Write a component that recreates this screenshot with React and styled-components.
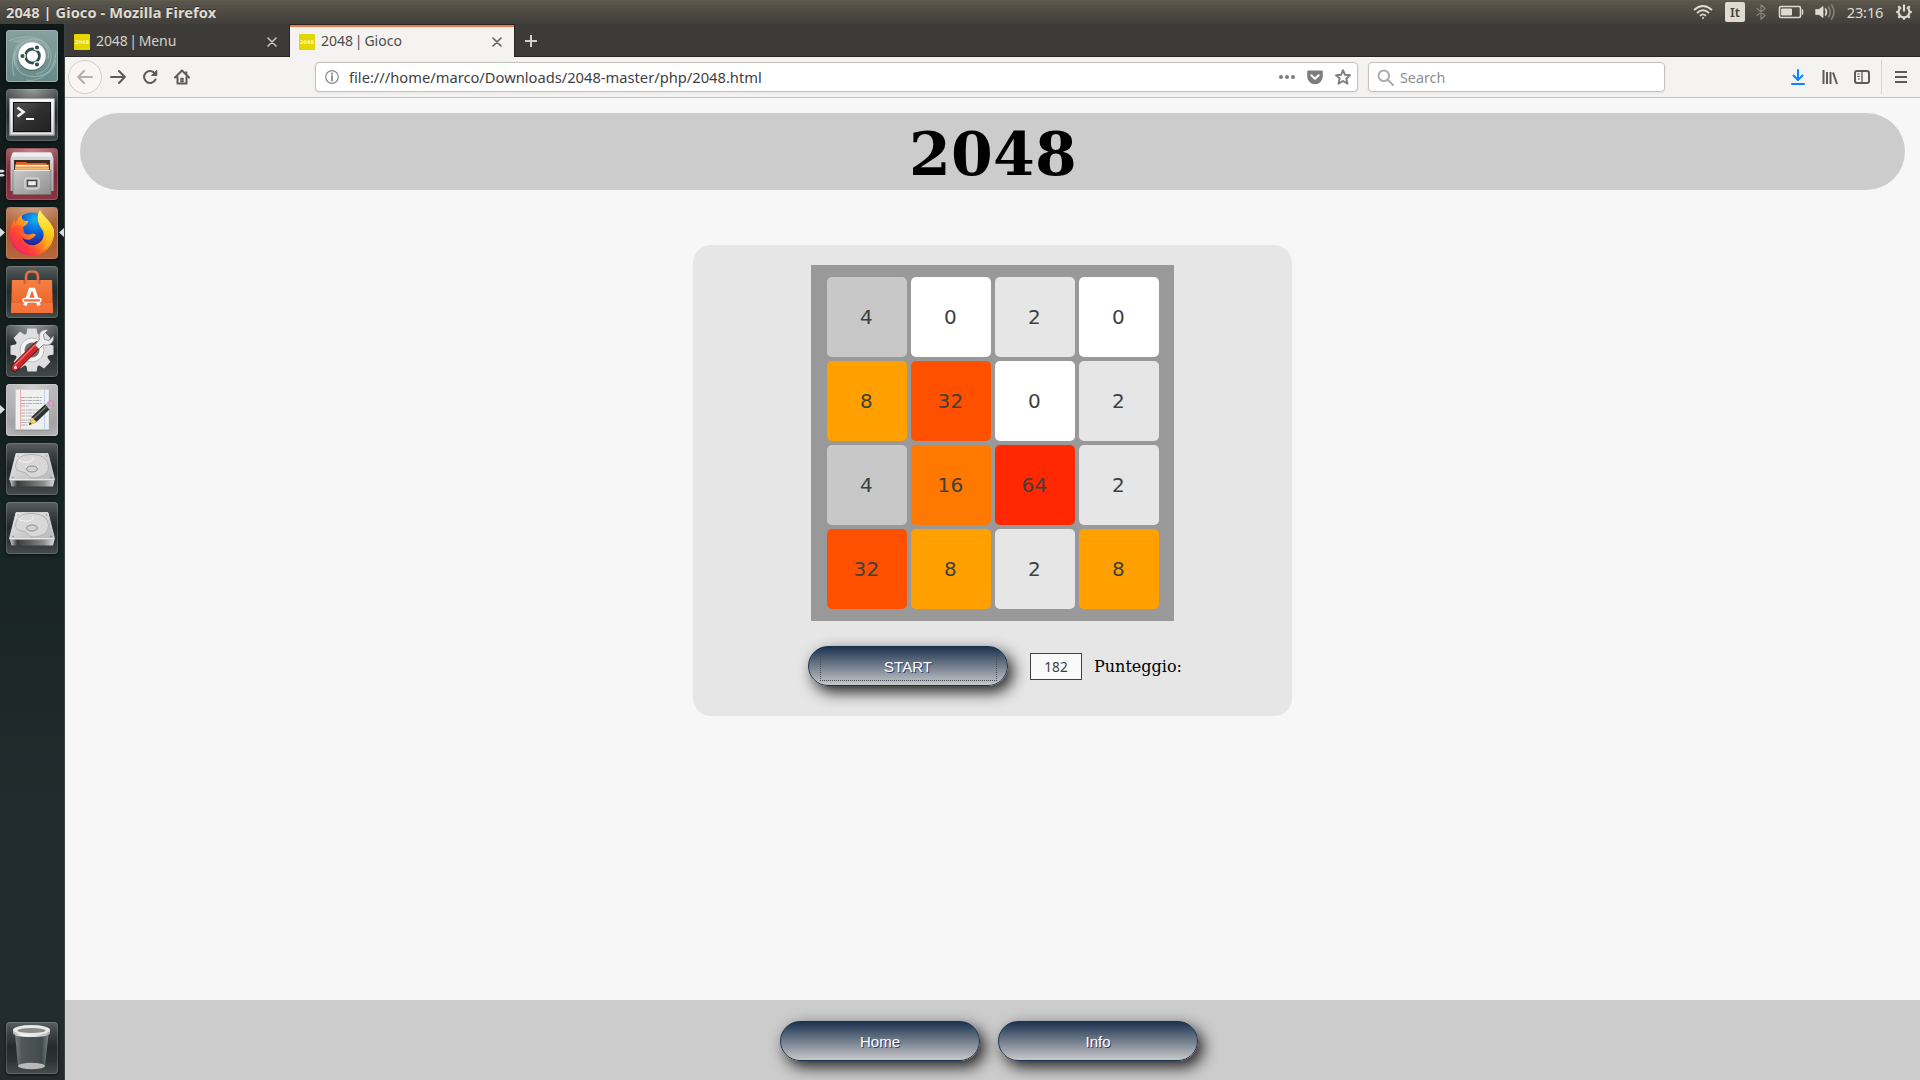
import React from "react";
import styled, { createGlobalStyle } from "styled-components";

const GlobalStyle = createGlobalStyle`
  * { box-sizing: border-box; }
  html, body { margin: 0; padding: 0; }
  body { width: 1920px; height: 1080px; overflow: hidden; background: #f7f7f7; }
  svg { display: block; flex: none; }
`;

const UI_FONT = `"Noto Sans", "Open Sans", sans-serif`;

const Desktop = styled.div`
  width: 1920px;
  height: 1080px;
  display: flex;
  flex-direction: column;
  overflow: hidden;
  font-family: ${UI_FONT};
`;

const TopPanel = styled.header`
  height: 24px;
  flex: none;
  display: flex;
  align-items: center;
  padding: 0 8px 0 6px;
  background: linear-gradient(#67634f 0, #5b574d 1px, #57534a 4px, #403f39 100%);
`;

const Text = styled.span`
  font-size: ${(p) => p.$size || 14}px;
  font-weight: ${(p) => p.$weight || 400};
  letter-spacing: ${(p) => p.$ls || 0}px;
  color: ${(p) => p.$color};
  line-height: 20px;
  white-space: pre;
`;

const WindowTitle = styled(Text)`
  flex: 1;
  padding-bottom: 1px;
  text-shadow: 0 -1px 0 #2f2e2a;
`;

const Clock = styled(Text)`
  padding-bottom: 1px;
`;

const Indicators = styled.div`
  display: flex;
  align-items: center;
  height: 24px;
`;

const Slot = styled.div`
  width: ${(p) => p.$w}px;
  margin-right: ${(p) => p.$mr || 0}px;
  display: flex;
  justify-content: center;
  align-items: center;
  flex: none;
`;

const LangBadge = styled.div`
  width: 20px;
  height: 20px;
  border-radius: 2px;
  background: #dfdbd2;
  color: #45433d;
  font-size: 13px;
  font-weight: 600;
  line-height: 20px;
  text-align: center;
`;

const Below = styled.div`
  flex: 1;
  display: flex;
  min-height: 0;
`;

const Launcher = styled.nav`
  width: 65px;
  flex: none;
  display: flex;
  flex-direction: column;
  gap: 7px;
  padding: 6px 0 6px 6px;
  border-right: 1px solid #3a4042;
  background: linear-gradient(#0f1918 0, #152120 40%, #222b2d 75%, #232b2d 100%);
`;

const Tile = styled.div`
  position: relative;
  width: 52px;
  height: 52px;
  flex: none;
  border-radius: 4px;
  background: ${(p) => p.$bg};
  box-shadow: inset 0 0 0 1px ${(p) => p.$edge || "rgba(255,255,255,0.16)"},
    0 1px 3px rgba(0, 0, 0, 0.6);
  margin-top: ${(p) => (p.$last ? "auto" : "0")};
`;

const Pip = styled.svg`
  position: absolute;
  left: ${(p) => p.$x}px;
  top: ${(p) => p.$y}px;
`;

const Browser = styled.section`
  flex: 1;
  display: flex;
  flex-direction: column;
  min-width: 0;
`;

const TabStrip = styled.div`
  height: 33px;
  flex: none;
  display: flex;
  background: #3c3b37;
  box-shadow: inset 0 -1px 0 #262521;
`;

const Tab = styled.div`
  width: ${(p) => (p.$active ? 226 : 224)}px;
  height: 33px;
  display: flex;
  align-items: center;
  padding: 2px 12px 0 9px;
  border: solid #262521;
  border-width: ${(p) => (p.$active ? "0 1px" : "0")};
  background: ${(p) =>
    p.$active
      ? "linear-gradient(#262521 0 1px, #f07746 1px 3px, #f4f3f2 3px)"
      : "transparent"};
`;

const Favicon = styled.div`
  width: 16px;
  height: 16px;
  flex: none;
  border-radius: 1px;
  background: #e6d600;
  color: #fff8b0;
  font: bold 5px/16px "DejaVu Sans", sans-serif;
  text-align: center;
  margin-right: 6px;
`;

const TabLabel = styled(Text)`
  flex: 1;
  word-spacing: -1.8px;
  padding-bottom: 1px;
`;

const NewTab = styled.div`
  width: 31px;
  height: 33px;
  display: flex;
  align-items: center;
  justify-content: center;
`;

const NavBar = styled.div`
  height: 41px;
  flex: none;
  display: flex;
  align-items: center;
  background: #f4f3f2;
  border-bottom: 1px solid #c2c1c0;
  padding: 0 1px 0 3px;
`;

const BackButton = styled.div`
  width: 34px;
  height: 34px;
  border: 1px solid #d0cfce;
  border-radius: 50%;
  background: #f7f6f5;
  display: flex;
  align-items: center;
  justify-content: center;
`;

const Field = styled.div`
  width: ${(p) => p.$w}px;
  height: 30px;
  margin-left: ${(p) => p.$ml}px;
  display: flex;
  align-items: center;
  padding-left: ${(p) => p.$pl}px;
  background: #fff;
  border: 1px solid #c4c2c0;
  border-radius: 4px;
  box-shadow: 0 1px 3px rgba(0, 0, 0, 0.07);
`;

const FieldText = styled(Text)`
  flex: 1;
  margin-left: ${(p) => p.$ml}px;
  padding-top: ${(p) => p.$pt || 0}px;
`;

const Spacer = styled.div`
  flex: 1;
`;

const Divider = styled.div`
  width: 1px;
  height: 34px;
  background: #d5d4d3;
  margin-left: 3px;
`;

const Page = styled.main`
  flex: 1;
  display: flex;
  flex-direction: column;
  align-items: center;
  background: #f7f7f7;
  padding-top: 15px;
  font-family: "DejaVu Serif", serif;
`;

const Banner = styled.h1`
  width: 1825px;
  height: 77px;
  flex: none;
  margin: 0;
  padding-left: 1px;
  border-radius: 40px;
  background: #ccc;
  color: #000;
  font: bold 60px/82px "DejaVu Serif", serif;
  letter-spacing: 0.3px;
  text-align: center;
`;

const Card = styled.section`
  width: 599px;
  height: 471px;
  margin-top: 55px;
  border-radius: 18px;
  background: #e6e6e6;
  display: flex;
  flex-direction: column;
  align-items: center;
  padding-top: 20px;
`;

const Board = styled.div`
  width: 363px;
  height: 356px;
  background: #999;
  padding: 12px 15px 12px 16px;
  display: grid;
  grid-template-columns: repeat(4, 80px);
  grid-auto-rows: 80px;
  gap: 4px;
`;

const cellColors = {
  0: "#ffffff",
  2: "#e6e6e6",
  4: "#c8c8c8",
  8: "#ffa000",
  16: "#ff7800",
  32: "#ff5000",
  64: "#ff2800",
};

const Cell = styled.div`
  background: ${(p) => cellColors[p.$v]};
  border-radius: 5px;
  color: #404040;
  font: 20px/81px "DejaVu Sans", sans-serif;
  letter-spacing: 0.3px;
  text-align: center;
  padding-right: 1px;
`;

const Controls = styled.div`
  width: 371px;
  height: 40px;
  margin: 25px 0 0 2px;
  display: flex;
  align-items: center;
`;

const PillButton = styled.button`
  width: 200px;
  height: 40px;
  flex: none;
  margin: 0;
  padding: 0;
  border: 1px solid #1c3350;
  border-radius: 20px;
  background: linear-gradient(#1c3350, #c8c8c8);
  box-shadow: 5px 6px 15px #222;
  color: #fff;
  font: 15px/40px "Liberation Sans", sans-serif;
  text-shadow: 1px 1px 0 #2f3d70;
  text-align: center;
`;

const FocusRing = styled.span`
  display: block;
  width: 177px;
  height: 26px;
  margin: 3px auto 0;
  border: dotted #444b54;
  border-width: 0 1px 1px;
  line-height: 24px;
`;

const Score = styled.div`
  width: 52px;
  height: 27px;
  flex: none;
  margin: 1px 0 0 22px;
  border: 1px solid #404040;
  background: #fafafa;
  color: #404040;
  font: 13.6px/26px "Noto Sans", sans-serif;
  text-align: center;
`;

const ScoreLabel = styled.span`
  flex: none;
  margin-left: 12px;
  padding-top: 2px;
  font: 16px/20px "DejaVu Serif", serif;
  color: #000;
  white-space: nowrap;
`;

const Footer = styled.footer`
  width: 100%;
  height: 80px;
  margin-top: auto;
  background: #ccc;
  display: flex;
  justify-content: center;
  gap: 18px;
  padding: 21px 7px 0 0;
`;

const I = ({ w = 16, h = w, c = "#5c5b5a", sw = 2, vb, children }) => (
  <svg width={w} height={h} viewBox={vb || `0 0 ${w} ${h}`} fill="none" stroke={c} strokeWidth={sw} strokeLinecap="round" strokeLinejoin="round">
    {children}
  </svg>
);

const CloseIcon = ({ c }) => (
  <I w={10} c={c} sw={1.6}><path d="M1 1l8 8M9 1l-8 8" /></I>
);

const LT = "#dfdbd2";

const UbuntuArt = () => (
  <svg width="52" height="52" viewBox="0 0 52 52">
    <defs>
      <linearGradient id="ub" x1="0" y1="0" x2="0" y2="1"><stop offset="0" stopColor="#86a19e" /><stop offset="1" stopColor="#678a89" /></linearGradient>
    </defs>
    <rect x="1" y="1" width="50" height="50" rx="3" fill="url(#ub)" />
    <g fill="none" stroke="#a9bfbd" strokeOpacity=".65" strokeWidth="1.2">
      <path d="M3 11C20 3 43 6 45 26C45 35 40 42 30 44" />
      <path d="M8 46C4 28 8 12 27 9C38 9 44 17 42 29" />
      <path d="M50 30C47 45 30 50 17 44C9 39 7 31 9 23" />
      <path d="M20 50C34 52 48 43 50 22" />
    </g>
    <path d="M5 12C22 4 41 8 44 27C42 15 29 8 17 16C9 23 9 34 15 41C5 34 4 22 12 13Z" fill="#b5c8c6" fillOpacity=".3" />
    <circle cx="26" cy="27" r="14" fill="#304846" fillOpacity=".45" />
    <circle cx="26" cy="26" r="13.8" fill="#fff" />
    <circle cx="26.4" cy="26" r="7" fill="none" stroke="#34504e" strokeWidth="2.8" />
    <g stroke="#fff" strokeWidth="1.2" fill="#34504e">
      <circle cx="16.5" cy="26" r="2.7" /><circle cx="31" cy="17.5" r="2.7" /><circle cx="31" cy="34.5" r="2.7" />
    </g>
  </svg>
);

const TerminalArt = () => (
  <svg width="52" height="52" viewBox="0 0 52 52">
    <defs>
      <linearGradient id="tf" x1="0" y1="0" x2="0" y2="1"><stop offset="0" stopColor="#f2f2f2" /><stop offset="1" stopColor="#b5b5b5" /></linearGradient>
      <linearGradient id="ts" x1="0" y1="0" x2="1" y2="1"><stop offset="0" stopColor="#555" /><stop offset=".5" stopColor="#2f2f2f" /><stop offset="1" stopColor="#222" /></linearGradient>
    </defs>
    <rect x="3.5" y="9.5" width="45" height="37" fill="url(#tf)" stroke="#999" strokeWidth=".6" />
    <rect x="5.5" y="11.5" width="41" height="33" fill="none" stroke="#fff" strokeOpacity=".7" />
    <rect x="7.5" y="13.5" width="37" height="29" fill="url(#ts)" stroke="#111" />
    <path d="M11.5 18.5l6 4.5l-6 4.5" fill="none" stroke="#f4f4f4" strokeWidth="2.6" />
    <rect x="20" y="29" width="8" height="2" fill="#fff" />
  </svg>
);

const FilesArt = () => (
  <svg width="52" height="52" viewBox="0 0 52 52">
    <defs>
      <linearGradient id="fc" x1="0" y1="0" x2="0" y2="1"><stop offset="0" stopColor="#ddd" /><stop offset="1" stopColor="#a8a8a8" /></linearGradient>
      <linearGradient id="fd" x1="0" y1="0" x2="1" y2="1"><stop offset="0" stopColor="#c9c9c9" /><stop offset="1" stopColor="#8f8f8f" /></linearGradient>
    </defs>
    <path d="M7 4.500h38l2.500 6v32.500h-43v-32.500z" fill="url(#fc)" />
    <path d="M7 4.500h38l1.800 4h-41.600z" fill="#efefef" />
    <rect x="8" y="12" width="36" height="13" fill="#3c2a22" />
    <path d="M10 14h10l1.500 1h19v8h-30.500z" fill="#d86227" />
    <rect x="9" y="16.500" width="34" height="6" fill="#f08334" />
    <rect x="10" y="17" width="32" height="1.500" fill="#fff4e0" />
    <rect x="9" y="19.500" width="34" height="2.500" fill="#f6bb68" />
    <path d="M7 22h38v24.500h-38z" fill="url(#fd)" stroke="#7a6a6a" strokeWidth=".6" />
    <path d="M8 22.500h36" stroke="#eee" />
    <rect x="19" y="30" width="14" height="11" rx="2" fill="#b5b5b5" stroke="#e3e3e3" />
    <rect x="21.500" y="32.500" width="9" height="5.500" fill="#eee" stroke="#444" strokeWidth="1.400" />
  </svg>
);

const FirefoxArt = () => (
  <svg width="52" height="52" viewBox="0 0 52 52">
    <defs>
      <linearGradient id="ff" x1=".9" y1=".1" x2=".15" y2=".9"><stop offset="0" stopColor="#fff04a" /><stop offset=".3" stopColor="#ffc81e" /><stop offset=".55" stopColor="#ff8a1c" /><stop offset=".8" stopColor="#ff3a3e" /><stop offset="1" stopColor="#f0157c" /></linearGradient>
      <radialGradient id="fb" cx=".6" cy=".2" r=".8"><stop offset="0" stopColor="#16b4f0" /><stop offset=".5" stopColor="#0a63d8" /><stop offset="1" stopColor="#2b1a8c" /></radialGradient>
      <linearGradient id="fy" x1=".5" y1="0" x2=".5" y2="1"><stop offset="0" stopColor="#fff36a" /><stop offset=".5" stopColor="#ffd51f" /><stop offset="1" stopColor="#ff9a1c" /></linearGradient>
    </defs>
    <circle cx="26" cy="22" r="16.500" fill="url(#fb)" />
    <path d="M4 27C4 20 6 15 9 12V17C11 14 12 10 16 8C15 12 17 14 22 14C23 16 19 19 17 20C18 24 17 26 20 27C24 29 27 25 30 28C28 29 28 31 25 32C21 34 18 32 16 30C18 36 23 39 29 38C36 36 39 30 37 24C33 19 30 13 34 3C36 8 45 14 48 23C49 38 39 48.500 26 48.500C13 48.500 4 39 4 27Z" fill="url(#ff)" />
    <path d="M34 3C35 9 45 13 48 24C48 34 43 40 36 43C42 36 43 29 39 24C35 18 28 14 34 3Z" fill="url(#fy)" />
    <path d="M6 22C9 18 13 17 17 20C18 24 17 26 20 27C15 26 13 27 13 31C12 40 22 46 33 43C22 51 7 43 5 29Z" fill="#ff4433" fillOpacity=".45" />
  </svg>
);

const SoftwareArt = () => (
  <svg width="52" height="52" viewBox="0 0 52 52">
    <defs><linearGradient id="sb" x1="0" y1="0" x2="0" y2="1"><stop offset="0" stopColor="#f58042" /><stop offset="1" stopColor="#ea5b20" /></linearGradient></defs>
    <path d="M6 14h40l1 33h-42z" fill="url(#sb)" />
    <path d="M5.200 37h41.600l.2 10h-42z" fill="#ff8c58" fillOpacity=".45" />
    <path d="M20 18V11Q20 5.500 25 5.500h2Q32 5.500 32 11V18" fill="none" stroke="#df714d" strokeWidth="2.600" />
    <path d="M18.200 18V14M33.800 18V14" stroke="#bf4a1d" strokeWidth="1" />
    <path d="M19 39.500L24.300 23.500h3.400L33 39.500" fill="none" stroke="#fff" strokeWidth="3.400" />
    <rect x="17" y="32.500" width="18" height="3.600" rx="1.800" fill="#f0703a" stroke="#fff" strokeWidth="1.400" />
  </svg>
);

const SettingsArt = () => (
  <svg width="52" height="52" viewBox="0 0 52 52">
    <g transform="translate(26 25)">
      <g fill="#dedede">
        {[0, 45, 90, 135, 180, 225, 270, 315].map((a) => (
          <path key={a} d="M-4.500 -21.500h9l1.500 7h-12z" transform={`rotate(${a})`} />
        ))}
        <circle r="17" />
      </g>
      <circle r="12" fill="#f4f4f4" stroke="#bbb" />
      <circle r="7.500" fill="#707070" />
    </g>
    <path d="M9 42.500L31 20.500" stroke="#5c0a0a" strokeWidth="8" strokeLinecap="round" />
    <path d="M9 42.500L31 20.500" stroke="#d3262a" strokeWidth="6.500" strokeLinecap="round" />
    <path d="M9 40L29 20" stroke="#f27070" strokeWidth="1.500" strokeLinecap="round" />
    <circle cx="9.500" cy="42.500" r="1.500" fill="#fff" />
    <path d="M29 20L33.500 14.500C31.500 8 36 3.500 42 5L37.500 9.500L38.500 14.500L43 15.500L47.500 11C48.500 17 43.500 22 37.500 19.500L33 24Z" fill="#eee" stroke="#888" strokeWidth=".9" />
  </svg>
);

const EditorArt = () => (
  <svg width="52" height="52" viewBox="0 0 52 52">
    <rect x="9" y="6" width="35" height="41" fill="#777" fillOpacity=".35" />
    <rect x="9.500" y="5.500" width="33.500" height="40" fill="#f0f0f0" stroke="#ccc" strokeWidth=".6" />
    <path d="M14.500 6v39" stroke="#f2a7a7" strokeWidth=".9" />
    <path d="M38.500 6v39" stroke="#b9cdf0" strokeWidth=".9" />
    <path d="M15 13.500h21M15 16.500h20M15 19.500h21M15 22h8M15 26h20M15 29h17M15 32h14M15 36h14M15 38.500h10M15 41h7" stroke="#b0b0b0" strokeWidth="1" strokeDasharray="4 .6 2 .6" />
    <path d="M23 41l2.500-8l14-13l4.500 5l-13.500 13z" fill="#30302f" />
    <path d="M27 35l13-12" stroke="#777" strokeWidth="1.600" />
    <path d="M23 41l2.500-8l5.300 5z" fill="#ead36c" />
    <path d="M23 41l1-2.800l1.800 1.700z" fill="#222" />
    <path d="M39 20.500l3-2.600l4.500 5l-3 2.600z" fill="#bbb" />
    <path d="M41.500 18.500l2-1.700q2-1 3.500 1t0 3.500l-1.500 1.500z" fill="#e5a1cf" stroke="#a86b94" strokeWidth=".5" />
  </svg>
);

const DriveArt = ({ id }) => (
  <svg width="52" height="52" viewBox="0 1 52 52">
    <defs>
      <linearGradient id={id + "a"} x1="0" y1="0" x2="1" y2="1"><stop offset="0" stopColor="#e8e8e8" /><stop offset="1" stopColor="#b9b9b9" /></linearGradient>
      <linearGradient id={id + "b"} x1="0" y1="0" x2="1" y2="0"><stop offset="0" stopColor="#d0d0d0" /><stop offset=".16" stopColor="#3a3a3a" /><stop offset=".75" stopColor="#8a8a8a" /><stop offset="1" stopColor="#ddd" /></linearGradient>
    </defs>
    <path d="M10 11.500h32l6.500 26h-45z" fill={`url(#${id}a)`} stroke="#f2f2f2" strokeWidth=".7" />
    <path d="M4 38.500h44.500l-1.500 6h-41.500z" fill={`url(#${id}b)`} />
    <path d="M3.500 38h45" stroke="#fff" />
    <path d="M12 17Q16 12 27 12.500Q41 13 42.500 24Q43 34 29 36Q23 36 22 33Q20 30 14 29.500Q6 27 12 17Z" fill="#d8d8d8" stroke="#a9a9a9" strokeWidth=".8" />
    <path d="M12 17Q15 21 23 20Q29 18 27 15" fill="none" stroke="#f5f5f5" />
    <ellipse cx="26" cy="27" rx="5.500" ry="3" fill="#d2d2d2" stroke="#8f8f8f" />
    <g fill="#777"><circle cx="12" cy="14" r=".6" /><circle cx="40.500" cy="14" r=".6" /><circle cx="7" cy="35.500" r=".7" /><circle cx="45" cy="35.500" r=".7" /></g>
  </svg>
);

const TrashArt = () => (
  <svg width="52" height="52" viewBox="0 0 52 52">
    <defs>
      <linearGradient id="tb" x1="0" y1="0" x2="1" y2="0"><stop offset="0" stopColor="#78807f" /><stop offset=".2" stopColor="#505958" /><stop offset=".8" stopColor="#424b4c" /><stop offset="1" stopColor="#7c8484" /></linearGradient>
      <linearGradient id="tr" x1="0" y1="0" x2="1" y2="0"><stop offset="0" stopColor="#aaa" /><stop offset=".25" stopColor="#fafafa" /><stop offset=".7" stopColor="#dcdcdc" /><stop offset="1" stopColor="#aaa" /></linearGradient>
    </defs>
    <path d="M9 12l3 32q13 6 27 0l3.500-32z" fill="url(#tb)" />
    <ellipse cx="25.500" cy="44" rx="13.500" ry="3.300" fill="#b9bab8" />
    <path d="M7 7.500v4Q9 15 25.500 15T44 11.500v-4z" fill="url(#tr)" />
    <ellipse cx="25.500" cy="8" rx="18.500" ry="5" fill="#e9e9e6" />
    <ellipse cx="25.500" cy="8.500" rx="14" ry="2.600" fill="#898b89" />
  </svg>
);

const glass = "linear-gradient(#5a5f60 0, #3b4243 22%, #232b2c 48%, #2b3436 75%, #454d4f 100%)";
const glossy = "radial-gradient(ellipse 60% 40% at 50% 0, #999 0, rgba(140,140,140,0) 100%), linear-gradient(#4a5051, #252d2e 50%, #42494b)";

const launcherItems = [
  { k: "dash", bg: "#7c9b98", edge: "#9db3b1", art: <UbuntuArt /> },
  { k: "term", bg: glossy, art: <TerminalArt /> },
  { k: "files", bg: "radial-gradient(ellipse 60% 40% at 50% 0, #c08d92 0, rgba(160,80,90,0) 100%), linear-gradient(#96505a, #7c2838 50%, #8d3443)", edge: "#a05562", art: <FilesArt />, left: "double" },
  { k: "firefox", bg: "radial-gradient(ellipse 60% 40% at 50% 0, #d3a083 0, rgba(180,110,70,0) 100%), linear-gradient(#b87852, #a75a30 50%, #b9683c)", edge: "#c07f58", art: <FirefoxArt />, left: "arrow", right: true },
  { k: "software", bg: glass, art: <SoftwareArt /> },
  { k: "settings", bg: glossy, art: <SettingsArt /> },
  { k: "editor", bg: "radial-gradient(circle at 50% 0, #d0d0d0, #a3a3a3 75%, #b4b4b4)", edge: "#c6c6c6", art: <EditorArt />, left: "arrow" },
  { k: "disk1", bg: glass, art: <DriveArt id="d1" /> },
  { k: "disk2", bg: glass, art: <DriveArt id="d2" /> },
  { k: "trash", bg: glass, art: <TrashArt />, last: true },
];

const board = [
  [4, 0, 2, 0],
  [8, 32, 0, 2],
  [4, 16, 64, 2],
  [32, 8, 2, 8],
];

export default function App() {
  return (
    <>
      <GlobalStyle />
      <Desktop>
        <TopPanel>
          <WindowTitle $size={14.6} $weight={700} $ls={0.08} $color={LT}>2048 | Gioco - Mozilla Firefox</WindowTitle>
          <Indicators>
            <Slot $w={44}>
              <I w={22} h={16} c={LT} sw={1.8}>
                <path d="M2 6Q11 -2 20 6M5 9Q11 3.500 17 9M8 11.800Q11 9 14 11.800" strokeLinecap="butt" />
                <circle cx="11" cy="14" r="1" fill={LT} stroke="none" />
              </I>
            </Slot>
            <LangBadge>It</LangBadge>
            <Slot $w={31}>
              <I w={10} h={16} c="#85827a" sw={1.3}><path d="M1 4.500l8 7L5 15.200V.8L9 4.500l-8 7" /></I>
            </Slot>
            <Slot $w={30}>
              <I w={26} h={14} c={LT} sw={1.6}>
                <rect x="1.500" y="1.500" width="21" height="11" rx="1.500" />
                <rect x="4" y="4" width="9.500" height="6" fill={LT} strokeWidth="1" />
                <path d="M24.500 5v4" strokeWidth="1.400" />
              </I>
            </Slot>
            <Slot $w={38}>
              <I w={21} h={18} c={LT} sw={1.6}>
                <path d="M1 6.500h3L8 3.500v11L4 11.500H1z" fill={LT} strokeWidth=".8" />
                <path d="M10.500 6Q12.500 9 10.500 12" />
                <path d="M13.500 4Q17 9 13.500 14M16.500 1.800Q21.500 9 16.500 16.200" stroke="#85827a" />
              </I>
            </Slot>
            <Slot $w={42} $mr={10}><Clock $size={14.6} $ls={-0.15} $color={LT}>23:16</Clock></Slot>
            <Slot $w={16}>
              <I w={18} c={LT} sw={2.2}>
                <path d="M6 4.300A5.500 5.500 0 1 0 12 4.300" strokeLinecap="butt" />
                <path d="M9 1.500v7" strokeLinecap="butt" />
                <path d="M1.200 9h2.500M14.300 9h2.500M3.300 3.300l1.800 1.800M14.700 3.300l-1.800 1.800M3.300 14.700l1.800-1.800M14.700 14.700l-1.800-1.800M9 14v2.800" strokeLinecap="butt" />
              </I>
            </Slot>
          </Indicators>
        </TopPanel>
        <Below>
          <Launcher>
            {launcherItems.map((t) => (
              <Tile key={t.k} $bg={t.bg} $edge={t.edge} $last={t.last}>
                {t.art}
                {t.left === "arrow" && <Pip $x={-6} $y={21} width="5" height="9"><path d="M0 0l5 4.500L0 9z" fill="#d9dcdc" /></Pip>}
                {t.left === "double" && <Pip $x={-6} $y={21} width="5" height="9"><path d="M0 .8h3l2 1.200l-2 1.400H0zM0 5h3l2 1.200l-2 1.400H0z" fill="#d9dcdc" /></Pip>}
                {t.right && <Pip $x={53} $y={21} width="5" height="9"><path d="M5 0L0 4.500L5 9z" fill="#d9dcdc" /></Pip>}
              </Tile>
            ))}
          </Launcher>
          <Browser>
            <TabStrip>
              <Tab>
                <Favicon>2048</Favicon>
                <TabLabel $ls={-0.1} $color="#d5d1c8">2048 | Menu</TabLabel>
                <CloseIcon c="#c8c5bd" />
              </Tab>
              <Tab $active>
                <Favicon>2048</Favicon>
                <TabLabel $ls={0} $color="#4c4c4c">2048 | Gioco</TabLabel>
                <CloseIcon c="#5f5e5c" />
              </Tab>
              <NewTab><I w={14} c="#d5d1c8" sw={2}><path d="M7 1v12M1 7h12" strokeLinecap="butt" /></I></NewTab>
            </TabStrip>
            <NavBar>
              <BackButton><I c="#b1b0af"><path d="M15 8H1.500M7 2L1.200 8L7 14" /></I></BackButton>
              <Slot $w={32}><I><path d="M1 8h13.500M9 2l5.800 6L9 14" /></I></Slot>
              <Slot $w={32}>
                <I><path d="M13 4.500A6 6 0 1 0 13.500 10.500" /><path d="M14.800 1.500v5h-5z" fill="#5c5b5a" strokeWidth="1" /></I>
              </Slot>
              <Slot $w={32}>
                <I><path d="M1 8.500L8 1.500L15 8.500M3.500 8v6.500h9V8" /><path d="M12.300 2.500v3" strokeLinecap="butt" /><rect x="7" y="9.500" width="2" height="3" strokeWidth="1.500" /></I>
              </Slot>
              <Field $w={1043} $ml={117} $pl={9}>
                <I w={14} c="#8b8a89" sw={1.2}><circle cx="7" cy="7" r="6.300" /><path d="M7 6v4.500" strokeWidth="1.800" /><circle cx="7" cy="3.700" r="1.100" fill="#8b8a89" stroke="none" /></I>
                <FieldText $ml={10} $size={14.7} $color="#3f3f3f">file:///home/marco/Downloads/2048-master/php/2048.html</FieldText>
                <Slot $w={28}><svg width="16" height="4"><g fill="#7d7d7d"><circle cx="2" cy="2" r="2" /><circle cx="8" cy="2" r="2" /><circle cx="14" cy="2" r="2" /></g></svg></Slot>
                <Slot $w={28}>
                  <svg width="16" height="15" viewBox="0 0 16 15"><path d="M1.500 .5h13q1.300 0 1.300 1.300V6.500a7.800 7.800 0 0 1-15.600 0V1.800Q.2 .5 1.500 .5z" fill="#7d7d7d" /><path d="M4.300 5.300L8 8.800l3.700-3.500" fill="none" stroke="#fff" strokeWidth="2" strokeLinecap="round" strokeLinejoin="round" /></svg>
                </Slot>
                <Slot $w={28}><I c="#7d7d7d" sw={1.9}><path d="M8 1.200L10 5.800L15 6.300L11.300 9.500L12.500 14.600L8 12L3.500 14.600L4.700 9.500L1 6.300L6 5.800z" /></I></Slot>
              </Field>
              <Field $w={297} $ml={10} $pl={8}>
                <I w={17} c="#adacab" sw={2}><circle cx="6.800" cy="6.800" r="5.300" /><path d="M10.800 10.800L16 16" /></I>
                <FieldText $ml={6} $pt={1} $size={14.3} $color="#8f8f8f">Search</FieldText>
              </Field>
              <Spacer />
              <Slot $w={32}><I c="#0a84ff" sw={2}><path d="M8 1v9M3.500 6.500L8 11l4.500-4.500M2 15h12" /></I></Slot>
              <Slot $w={32}><I><path d="M1.500 1v14M5 3v12M8.500 3v12M11 3.500L15 15" strokeLinecap="butt" /></I></Slot>
              <Slot $w={32}><I><rect x="1" y="2" width="14" height="12" rx="2" /><path d="M8 2v12" strokeWidth="1.300" /><path d="M3.300 5h2.500M3.300 7.500h2.500M3.900 10h1.900" strokeWidth="1" strokeLinecap="butt" /></I></Slot>
              <Divider />
              <Slot $w={37}><I w={12} h={14}><path d="M0 2h12M0 7h12M0 12h12" strokeLinecap="butt" /></I></Slot>
            </NavBar>
            <Page>
              <Banner>2048</Banner>
              <Card>
                <Board>
                  {board.flat().map((v, i) => (
                    <Cell key={i} $v={v}>{v}</Cell>
                  ))}
                </Board>
                <Controls>
                  <PillButton><FocusRing>START</FocusRing></PillButton>
                  <Score>182</Score>
                  <ScoreLabel>Punteggio:</ScoreLabel>
                </Controls>
              </Card>
              <Footer>
                <PillButton>Home</PillButton>
                <PillButton>Info</PillButton>
              </Footer>
            </Page>
          </Browser>
        </Below>
      </Desktop>
    </>
  );
}
